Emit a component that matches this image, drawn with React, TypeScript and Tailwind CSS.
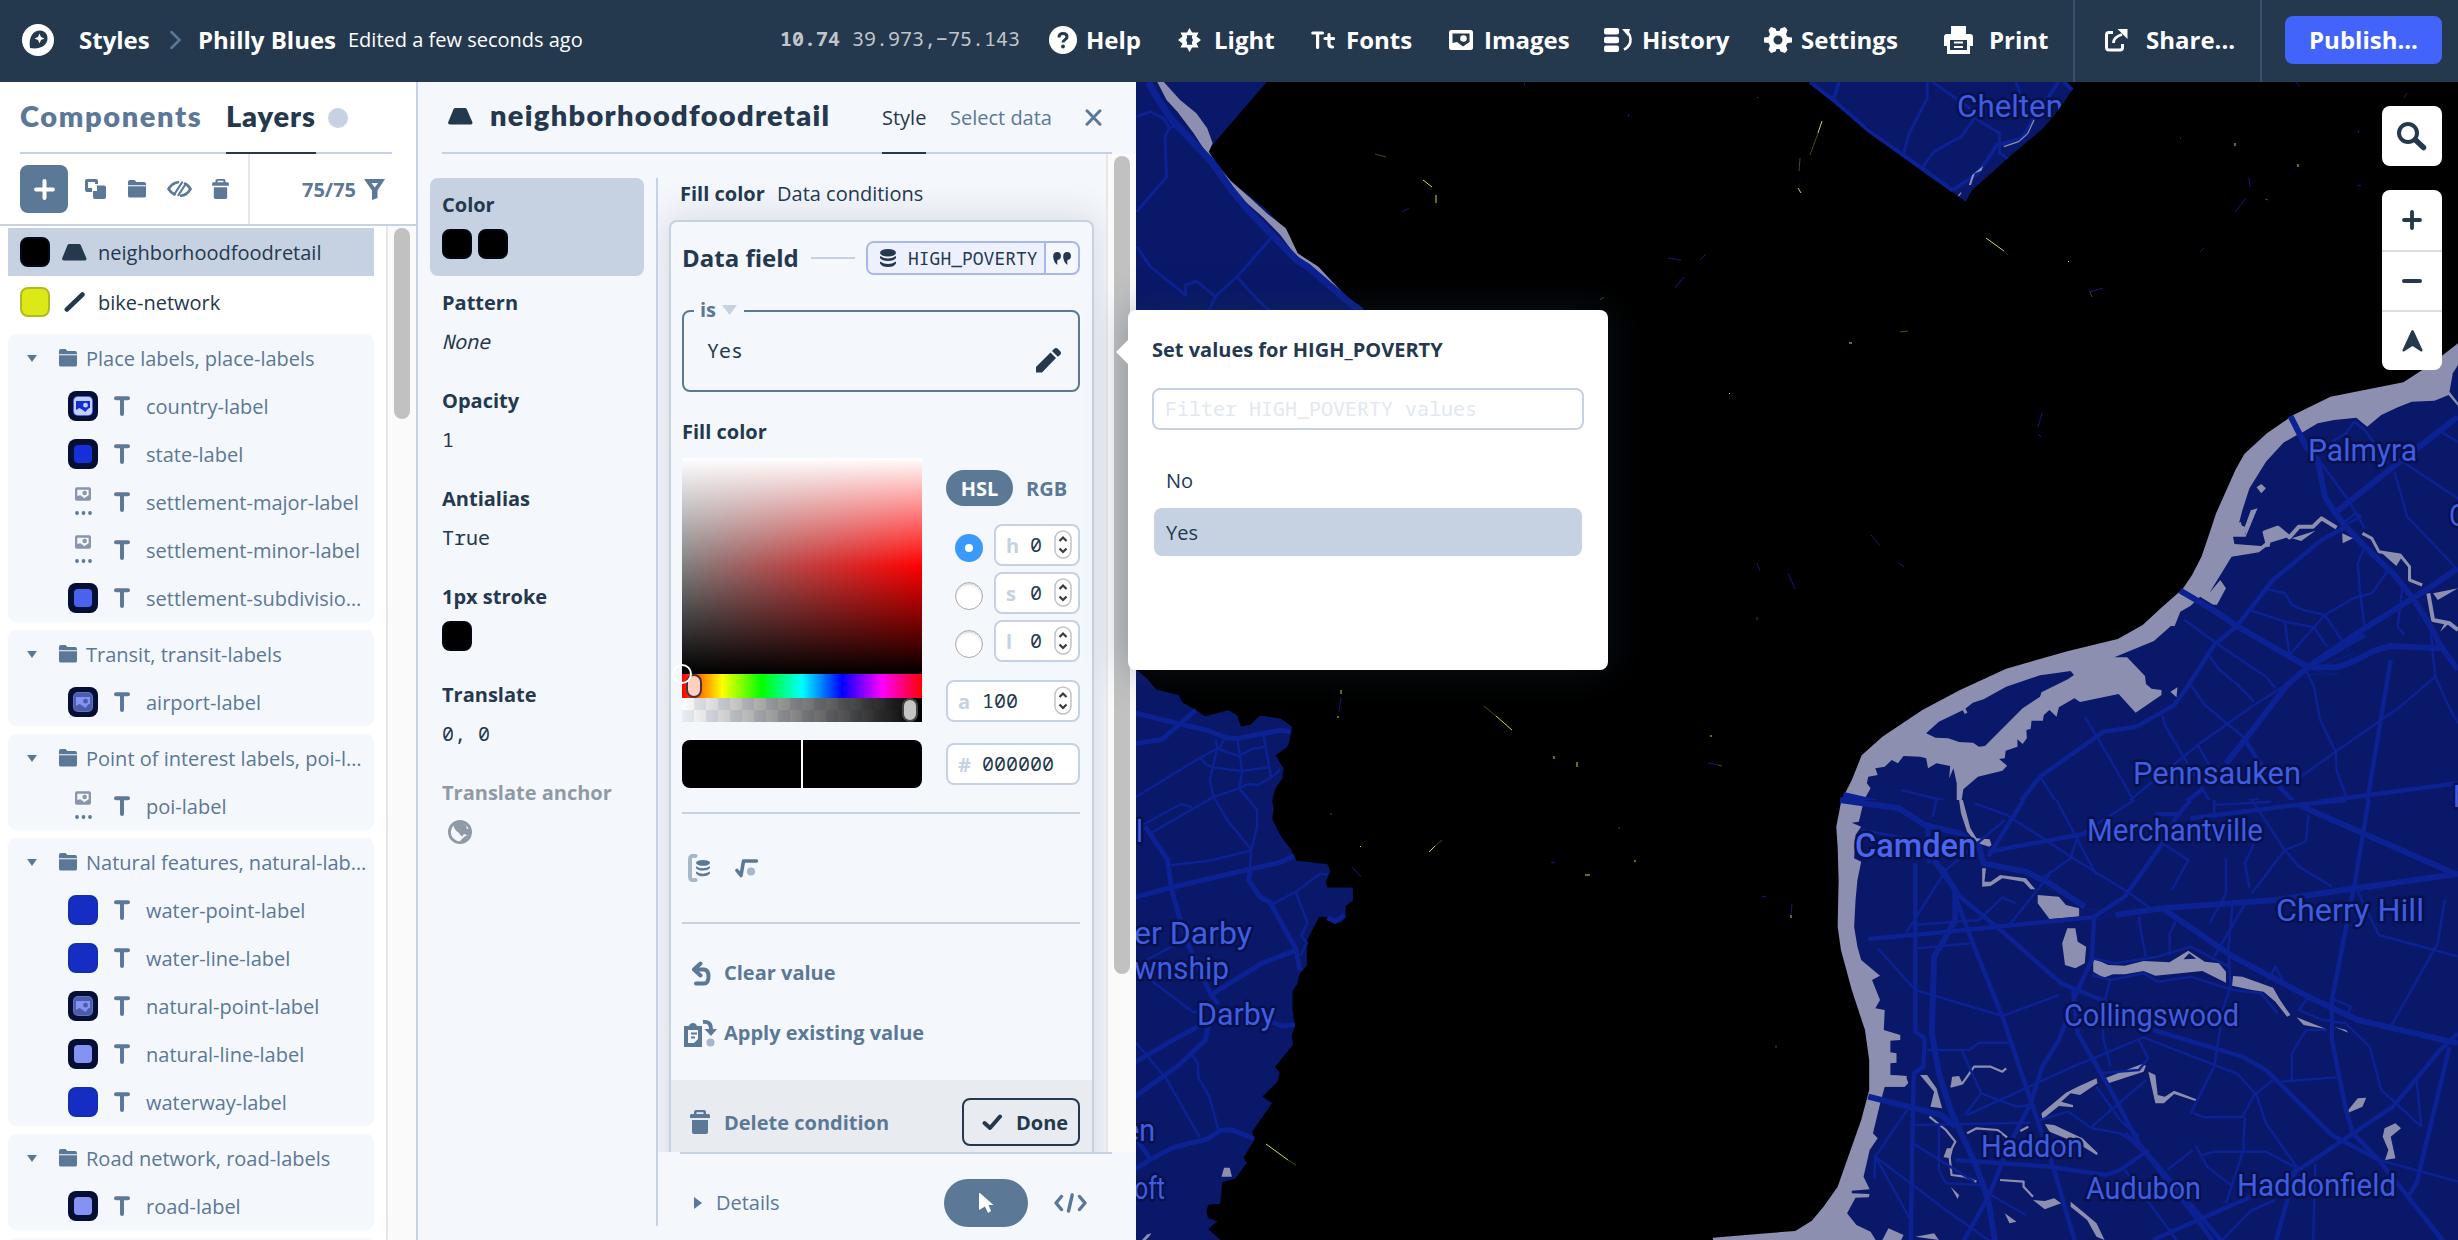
import React from 'react';

const SANS = "font-['Open_Sans',sans-serif]";
const MONO = "font-['Noto_Sans_Mono','DejaVu_Sans_Mono',monospace]";

type IconProps = { className?: string };

/* ---------- icons ---------- */

const LogoIcon = () => (
  <svg width="32" height="32" viewBox="0 0 32 32" fill="none">
    <circle cx="16" cy="16" r="16" fill="#fff" />
    <path d="M8 24 C6 12 12 6.500 18 6.500 C23 6.500 25.500 10.500 25.500 14.500 C25.500 20.500 19 26 8 24Z" fill="#24384e" />
    <path d="M17.500 9.500 L19 13 L22.500 14.500 L19 16 L17.500 19.500 L16 16 L12.500 14.500 L16 13Z" fill="#fff" />
  </svg>
);

const HelpIcon = () => (
  <svg width="28" height="28" viewBox="0 0 28 28" fill="none">
    <circle cx="14" cy="14" r="14" fill="#fff" />
    <path d="M10 11.500 C10 9 11.500 7.500 14 7.500 C16.500 7.500 18 9 18 11 C18 13.500 14 13.800 14 16.500" stroke="#24384e" strokeWidth="3" />
    <circle cx="14" cy="20.500" r="1.900" fill="#24384e" />
  </svg>
);

const LightIcon = () => (
  <svg width="23" height="24" viewBox="0 0 23 24" fill="#fff">
    <path
      fillRule="evenodd"
      d="M11.500 0 L14 4.500 H20.500 L18.500 8.500 L23 12 L18.500 15.500 L20.500 19.500 H14 L11.500 24 L9 19.500 H2.500 L4.500 15.500 L0 12 L4.500 8.500 L2.500 4.500 H9Z M8.500 7.300 Q10 9 8 12 Q10 15 8.500 16.700 H14.500 Q13 15 15 12 Q13 9 14.500 7.300Z"
    />
  </svg>
);

const FontsIcon = () => (
  <svg width="24" height="20" viewBox="0 0 24 20" fill="none" stroke="#fff" strokeWidth="3.200" strokeLinecap="round">
    <path d="M1.800 3 H11.500 M6.600 3 V17.500" />
    <path d="M14 8.500 H22.500 M18 4.500 V14 Q18 17 21.500 17" />
  </svg>
);

const ImageIcon = ({ className = '' }: IconProps) => (
  <svg className={className} viewBox="0 0 24 20">
    <path
      fill="currentColor"
      fillRule="evenodd"
      d="M2.500 0 H21.500 Q24 0 24 2.500 V17.500 Q24 20 21.500 20 H2.500 Q0 20 0 17.500 V2.500 Q0 0 2.500 0Z M3.500 3.500 V13 L8 12 L14 16.500 L20.500 12 V3.500Z"
    />
    <circle cx="14.500" cy="8.500" r="3.300" fill="currentColor" />
  </svg>
);

const HistoryIcon = () => (
  <svg width="29" height="24" viewBox="0 0 29 24">
    <g fill="#fff">
      <rect x="0" y="0" width="15" height="6.500" rx="2" />
      <rect x="0" y="8.700" width="15" height="6.500" rx="2" />
      <rect x="0" y="17.400" width="15" height="6.500" rx="2" />
      <path d="M18 1 L26 1 L24 8Z" />
    </g>
    <path d="M20 21.500 Q27 18 26.500 11 Q26 6 22 3" fill="none" stroke="#fff" strokeWidth="2.600" />
  </svg>
);

const SettingsIcon = () => (
  <svg width="28" height="26" viewBox="0 0 28 26">
    <path
      fill="#fff"
      fillRule="evenodd"
      d="M7 0 L11.500 1.500 L12.500 4 H15.500 L16.500 1.500 L21 0 L23.500 3 L22 7.500 L23.500 10 L28 10.500 V15.500 L23.500 16 L22 18.500 L23.500 23 L21 26 L16.500 24.500 L15.500 22 H12.500 L11.500 24.500 L7 26 L4.500 23 L6 18.500 L4.500 16 L0 15.500 V10.500 L4.500 10 L6 7.500 L4.500 3Z M14 8.500 A4.500 4.500 0 1 0 14 17.500 A4.500 4.500 0 1 0 14 8.500Z"
    />
  </svg>
);

const PrintIcon = () => (
  <svg width="29" height="28" viewBox="0 0 29 28">
    <path fill="#fff" d="M7 0 H22 V8 H26 Q29 8 29 11 V20 H26 V28 H3 V20 H0 V11 Q0 8 3 8 H7Z" />
    <path fill="#24384e" d="M6 14 H23 V24 H6Z" />
    <path fill="#fff" d="M10 15.500 H19 V17.500 H10Z M10 20 H19 V22 H10Z" />
  </svg>
);

const ShareIcon = () => (
  <svg width="23" height="23" viewBox="0 0 23 23" fill="none">
    <path d="M8 3.500 H4 Q1.500 3.500 1.500 6 V18.500 Q1.500 21 4 21 H15 Q17.500 21 17.500 18.500 V15" stroke="#fff" strokeWidth="3" />
    <path d="M8.500 14 Q8.500 8 17 5.500" stroke="#fff" strokeWidth="2.800" />
    <path d="M12.500 0 H22.500 V10Z" fill="#fff" />
  </svg>
);

const ChevronIcon = () => (
  <svg width="12" height="18" viewBox="0 0 12 18" fill="none">
    <path d="M1.500 1 L9.500 9 L1.500 17" stroke="#5b7897" strokeWidth="2.600" strokeLinecap="round" />
  </svg>
);

const PlusIcon = ({ className = '' }: IconProps) => (
  <svg className={className} viewBox="0 0 20 20" stroke="currentColor" strokeWidth="3.800" strokeLinecap="round">
    <path d="M10 2 V18 M2 10 H18" />
  </svg>
);

const CopyIcon = () => (
  <svg width="21" height="20" viewBox="0 0 21 20" fill="#5b7897">
    <path fillRule="evenodd" d="M2 0 H11 Q13 0 13 2 V5 H10 V3 H3 V9 H7 V13 H2 Q0 13 0 11 V2 Q0 0 2 0Z" />
    <path d="M10 6.500 H19 Q21 6.500 21 8.500 V18 Q21 20 19 20 H10 Q8 20 8 18 V12 H12 V7Z" />
  </svg>
);

const FolderIcon = () => (
  <svg width="18" height="18" viewBox="0 0 18 18" fill="#5b7897">
    <path d="M0 2 Q0 0 2 0 H6.500 L8.500 2 H16 Q18 2 18 4 V5.200 H0Z" />
    <path d="M0 6.300 H18 V16 Q18 17.500 16 17.500 H2 Q0 17.500 0 16Z" />
  </svg>
);

const EyeOffIcon = () => (
  <svg width="25" height="18" viewBox="0 0 25 18" fill="none" stroke="#5b7897" strokeWidth="2.600" strokeLinecap="round">
    <path d="M7.500 14.500 Q4 13 1.500 9 Q5 3 11 2.200 M18 3.500 Q21 5 23.500 9 Q20 15 14 15.800" />
    <path d="M15 2.500 L7.500 14 M18 5 L11.500 15" strokeWidth="2.200" />
  </svg>
);

const TrashIcon = ({ className = '' }: IconProps) => (
  <svg className={className} viewBox="0 0 20 24" fill="currentColor">
    <path fillRule="evenodd" d="M6 0 H14 Q16 0 16 2 V4 H18.500 Q20 4 20 5.500 V8 H0 V5.500 Q0 4 1.500 4 H4 V2 Q4 0 6 0Z M6.500 2.200 V4 H13.500 V2.200Z" />
    <path d="M2 10 H18 V22 Q18 24 16 24 H4 Q2 24 2 22Z" />
  </svg>
);

const FilterIcon = () => (
  <svg width="21" height="21" viewBox="0 0 21 21" fill="#5b7897">
    <path fillRule="evenodd" d="M0 0 H21 L13.500 11.500 V19 L8 21 V11.500Z M7.500 4 L10.700 8.500 L14 4Z" />
  </svg>
);

const PolygonIcon = () => (
  <svg width="25" height="17" viewBox="0 0 25 17" fill="#24384e">
    <path d="M7.500 0 H17 Q18.200 0 18.800 1.200 L24.300 14 Q25 16.500 22.500 16.500 H2 Q-.5 16.500 .3 14 L5.500 1.200 Q6 0 7.500 0Z" />
  </svg>
);

const LineIcon = () => (
  <svg width="22" height="20" viewBox="0 0 22 20" stroke="#24384e" strokeWidth="4.500" strokeLinecap="round">
    <path d="M2.800 17.500 L18.500 2.500" />
  </svg>
);

const TextTypeIcon = () => (
  <svg width="16" height="20" viewBox="0 0 16 20" stroke="#5b7897" strokeWidth="4" strokeLinecap="round">
    <path d="M2 2.300 H14 M8 3 V18" />
  </svg>
);

const CaretDown = ({ className = '' }: IconProps) => (
  <svg className={className} viewBox="0 0 10 7" preserveAspectRatio="none" fill="currentColor">
    <path d="M0 0 H10 L5 7Z" />
  </svg>
);

const DatabaseIcon = ({ className = '' }: IconProps) => (
  <svg className={className} viewBox="0 0 16 18" fill="currentColor">
    <ellipse cx="8" cy="3.800" rx="8" ry="3.800" />
    <path d="M0 7 Q8 12 16 7 V9 Q14 12 8 12 Q2 12 0 9Z M0 12.500 Q8 17.500 16 12.500 V14.500 Q14 18 8 18 Q2 18 0 14.500Z" />
  </svg>
);

const QuoteIcon = () => (
  <svg width="18" height="13" viewBox="0 0 18 13" fill="#24384e">
    <path d="M4.200 0 Q0 0 .2 5 Q.5 10 4.500 13 Q4 10 4.500 8 Q8 7.500 8 4 Q7.800 0 4.200 0Z M14.200 0 Q10 0 10.200 5 Q10.500 10 14.500 13 Q14 10 14.500 8 Q18 7.500 18 4 Q17.800 0 14.200 0Z" />
  </svg>
);

const PencilIcon = () => (
  <svg width="25" height="25" viewBox="0 0 25 25" fill="#24384e">
    <path d="M0 19 L14.500 4.500 L20 10 L6 24.500 H0Z" />
    <path d="M16 3 L18 1 Q20 -1 22 1 L24 3 Q26 5 24 7 L21.800 8.800Z" />
  </svg>
);

const GlobeIcon = () => (
  <svg width="24" height="24" viewBox="0 0 24 24">
    <circle cx="12" cy="12" r="10.600" fill="none" stroke="#8f9aa6" strokeWidth="2.800" />
    <path d="M5 4 Q8 1 13 1.200 L19 6 Q17 8 20 9 L22 9 Q22 14 20 16 Q15 12 15 16 Q13 17 11 13 Q6 10 5 4Z" fill="#8f9aa6" />
    <path d="M12 21 Q17 15 21 15 L17 21Z" fill="#8f9aa6" />
  </svg>
);

const BracketDataIcon = () => (
  <svg width="22" height="28" viewBox="0 0 22 28">
    <path d="M7.500 2 Q2 1 2 5 V23 Q2 27 7.500 26" fill="none" stroke="#a6b7cb" strokeWidth="4" strokeLinecap="round" />
    <g transform="translate(8 6) scale(.88)" fill="#5b7897">
      <ellipse cx="8" cy="3.300" rx="8" ry="3.300" />
      <path d="M0 7 Q8 12 16 7 V9 Q14 12 8 12 Q2 12 0 9Z M0 13 Q8 18 16 13 V15 Q14 18.500 8 18.500 Q2 18.500 0 15Z" />
    </g>
  </svg>
);

const FormulaIcon = () => (
  <svg width="24" height="19" viewBox="0 0 24 19" fill="none">
    <path d="M2 11.500 L6 16.500 L8.500 2 H21.500" stroke="#5b7897" strokeWidth="3.600" strokeLinecap="round" strokeLinejoin="round" />
    <circle cx="16" cy="12.500" r="4" fill="#a6b7cb" />
  </svg>
);

const UndoIcon = () => (
  <svg width="20" height="25" viewBox="0 0 20 25" fill="none" stroke="#5b7897" strokeWidth="4" strokeLinecap="round" strokeLinejoin="round">
    <path d="M9.500 2.500 L3 8.500 L9.500 14.500 M4 8.500 H13 Q17.500 9 17.500 15 Q17.500 22.500 13 22.500 H5" />
  </svg>
);

const ApplyIcon = () => (
  <svg width="33" height="27" viewBox="0 0 33 27">
    <path fill="#5b7897" fillRule="evenodd" d="M0 6 H5 Q6 3 9 3 Q12 3 13 6 H18 V27 H0Z M4 10 V23 H10 L14 19 V10Z" />
    <path d="M7 13.500 H13 M7 17.500 H11" stroke="#5b7897" strokeWidth="2" />
    <path d="M19 2 Q27 1 27 9" fill="none" stroke="#5b7897" strokeWidth="3.800" />
    <path d="M20.500 9 H33 L27 16Z" fill="#5b7897" />
    <circle cx="26.500" cy="22.500" r="4" fill="#a6b7cb" />
  </svg>
);

const CheckIcon = () => (
  <svg width="21" height="17" viewBox="0 0 21 17" fill="none" stroke="#24384e" strokeWidth="4" strokeLinecap="round" strokeLinejoin="round">
    <path d="M2.500 9 L8 14 L18 2.500" />
  </svg>
);

const PointerIcon = () => (
  <svg width="15" height="20" viewBox="0 0 15 20" fill="#fff">
    <path d="M0 .5 Q.5 -.5 1.500 .5 L14.500 12 H9.500 L12 18 L9 20 L6 13.500 L0 17Z" />
  </svg>
);

const CodeIcon = () => (
  <svg width="33" height="20" viewBox="0 0 33 20" fill="none" stroke="#5b7897" strokeWidth="3.400" strokeLinecap="round" strokeLinejoin="round">
    <path d="M7.500 3.500 L2 10 L7.500 16.500 M25.500 3.500 L31 10 L25.500 16.500 M18.200 2 L14.500 18" />
  </svg>
);

const CloseIcon = () => (
  <svg width="17" height="17" viewBox="0 0 17 17" stroke="#5b7897" strokeWidth="3" strokeLinecap="round">
    <path d="M2 1.800 L15 15.200 M15 1.800 L2 15.200" />
  </svg>
);

/* ---------- header ---------- */

type NavItem = { label: string; width: string; iconWidth: string; icon: React.ReactNode };

const nav: NavItem[] = [
  { label: 'Help', width: 'w-[129px]', iconWidth: 'w-[37px]', icon: <HelpIcon /> },
  { label: 'Light', width: 'w-[133px]', iconWidth: 'w-9', icon: <LightIcon /> },
  { label: 'Fonts', width: 'w-[138px]', iconWidth: 'w-[35px]', icon: <FontsIcon /> },
  { label: 'Images', width: 'w-[155px]', iconWidth: 'w-[35px]', icon: <ImageIcon className="h-5 w-6" /> },
  { label: 'History', width: 'w-40', iconWidth: 'w-[38px]', icon: <HistoryIcon /> },
  { label: 'Settings', width: 'w-[180px]', iconWidth: 'w-[37px]', icon: <SettingsIcon /> },
  { label: 'Print', width: 'w-[129px]', iconWidth: 'w-[45px]', icon: <PrintIcon /> },
];

function Header() {
  return (
    <header className="flex h-[82px] w-full shrink-0 items-stretch bg-[#24384e] text-2xl leading-8 font-bold whitespace-nowrap text-white">
      <div className="flex w-[780px] items-center pb-0.5 pl-[22px]">
        <div className="w-[57px]"><LogoIcon /></div>
        <span className="w-[91px]">Styles</span>
        <span className="w-[28px]"><ChevronIcon /></span>
        <span className="w-[150px]">Philly Blues</span>
        <span className="text-xl font-normal">Edited a few seconds ago</span>
      </div>
      <div className={`flex w-[269px] items-center pb-1 text-xl font-normal text-[#c0c5cb] ${MONO}`}>
        <span className="w-[72px] font-bold">10.74</span>
        <span>39.973,−75.143</span>
      </div>
      {nav.map((n) => (
        <div key={n.label} className={`flex items-center pb-0.5 ${n.width}`}>
          <span className={n.iconWidth}>{n.icon}</span>
          <span>{n.label}</span>
        </div>
      ))}
      <div className="flex w-[187px] items-center border-l-2 border-[#3c5068] pb-0.5 pl-[30px]">
        <span className="w-[41px]"><ShareIcon /></span>
        <span>Share...</span>
      </div>
      <div className="flex flex-1 items-center border-l-2 border-[#3c5068] pb-0.5 pl-[23px]">
        <button className="h-12 w-[157px] rounded-lg bg-[#4264fb] text-center font-bold">Publish...</button>
      </div>
    </header>
  );
}

/* ---------- layer list ---------- */

type Swatch = 'outlined' | 'solid' | 'icon' | 'more';
type Layer = { name: string; swatch: Swatch; fill?: string; glyph?: string };

const groups: { name: string; layers: Layer[] }[] = [
  {
    name: 'Place labels, place-labels',
    layers: [
      { name: 'country-label', swatch: 'icon', fill: 'bg-[#c9d1fa] ring-[#4264fb]', glyph: 'text-[#1330d8]' },
      { name: 'state-label', swatch: 'outlined', fill: 'bg-[#1530d8]' },
      { name: 'settlement-major-label', swatch: 'more' },
      { name: 'settlement-minor-label', swatch: 'more' },
      { name: 'settlement-subdivisio…', swatch: 'outlined', fill: 'bg-[#4963ee]' },
    ],
  },
  {
    name: 'Transit, transit-labels',
    layers: [{ name: 'airport-label', swatch: 'icon', fill: 'bg-[#4b5cab] ring-[#6173c4]', glyph: 'text-[#8492f3]' }],
  },
  { name: 'Point of interest labels, poi-l…', layers: [{ name: 'poi-label', swatch: 'more' }] },
  {
    name: 'Natural features, natural-lab…',
    layers: [
      { name: 'water-point-label', swatch: 'solid' },
      { name: 'water-line-label', swatch: 'solid' },
      { name: 'natural-point-label', swatch: 'icon', fill: 'bg-[#4b5cab] ring-[#6173c4]', glyph: 'text-[#8492f3]' },
      { name: 'natural-line-label', swatch: 'outlined', fill: 'bg-[#8492f3]' },
      { name: 'waterway-label', swatch: 'solid' },
    ],
  },
  { name: 'Road network, road-labels', layers: [{ name: 'road-label', swatch: 'outlined', fill: 'bg-[#8492f3]' }] },
];

function SymbolGlyph({ className = '' }: IconProps) {
  return (
    <svg className={className} viewBox="0 0 14 11" fill="currentColor">
      <path fillRule="evenodd" d="M0 0 H14 V7 Q12.500 6.500 9.500 11 L6 8.500 L3.500 7 L0 9Z M9.500 1.800 A2.400 2.400 0 1 0 9.500 6.600 A2.400 2.400 0 1 0 9.500 1.800Z" />
    </svg>
  );
}

function LayerSwatch({ layer }: { layer: Layer }) {
  if (layer.swatch === 'solid') return <span className="size-[30px] rounded-lg border-2 border-[#142fae] bg-[#152dc2]" />;
  if (layer.swatch === 'more')
    return (
      <span className="flex size-[30px] flex-col items-center justify-between pb-0.5">
        <ImageIcon className="h-3.5 w-4 text-[#8796a8]" />
        <svg width="17" height="4" viewBox="0 0 17 4" fill="#5b7897">
          <circle cx="2" cy="2" r="1.900" />
          <circle cx="8.500" cy="2" r="1.900" />
          <circle cx="15" cy="2" r="1.900" />
        </svg>
      </span>
    );
  return (
    <span className="flex size-[30px] items-center justify-center rounded-lg bg-[#050e33]">
      <span className={`flex size-[18px] items-center justify-center rounded-sm ${layer.swatch === 'icon' ? 'ring-1' : ''} ${layer.fill}`}>
        {layer.swatch === 'icon' && <SymbolGlyph className={`h-[11px] w-3.5 ${layer.glyph}`} />}
      </span>
    </span>
  );
}

function LayersPanel() {
  return (
    <aside className="flex w-[418px] shrink-0 flex-col border-r-2 border-[#c6d2e1] bg-white">
      <div className="ml-5 flex h-[72px] w-[372px] border-b-2 border-[#c6d2e1] font-['Lato',sans-serif] text-[29px] leading-[68px] font-extrabold">
        <span className="w-[206px] tracking-[1.6px] text-[#5b7897]">Components</span>
        <span className="h-[72px] w-[90px] border-b-2 border-[#24384e] tracking-[.9px] whitespace-nowrap text-[#24384e]">Layers</span>
        <span className="mt-[26px] ml-3 size-5 rounded-full bg-[#c6d2e1]" />
      </div>
      <div className="flex h-[72px] w-full shrink-0 items-stretch border-b-2 border-[#c6d2e1] pl-5">
        <div className="flex w-[230px] items-center border-r-2 border-[#e6e8eb]">
          <span className="flex size-12 items-center justify-center rounded-lg bg-[#5b7897] text-white">
            <PlusIcon className="size-[21px]" />
          </span>
          <span className="ml-[17px]"><CopyIcon /></span>
          <span className="ml-[22px]"><FolderIcon /></span>
          <span className="ml-[21px]"><EyeOffIcon /></span>
          <TrashIcon className="ml-5 h-5 w-[17px] text-[#5b7897]" />
        </div>
        <div className="flex items-center pl-[52px] text-xl font-bold text-[#5b7897]">
          <span className="w-[62px] pt-px">75/75</span>
          <FilterIcon />
        </div>
      </div>
      <div className="flex min-h-0 flex-1 overflow-hidden text-xl whitespace-nowrap">
        <div className="flex w-[386px] flex-col gap-2 pt-0.5 pr-3 pl-2">
          <div className="flex flex-col text-[#24384e]">
            <div className="flex h-12 items-center bg-[#c6d2e1] pl-3">
              <span className="size-[30px] rounded-lg border-2 border-[#020c16] bg-black" />
              <span className="ml-3 w-9"><PolygonIcon /></span>
              <span className="pt-px">neighborhoodfoodretail</span>
            </div>
            <div className="flex h-[50px] items-center pt-0.5 pl-3">
              <span className="size-[30px] rounded-lg border-2 border-[#b1bb1d] bg-[#dde916]" />
              <span className="ml-3.5 w-[34px]"><LineIcon /></span>
              <span className="pt-px">bike-network</span>
            </div>
          </div>
          {groups.map((g) => (
            <div key={g.name} className="shrink-0 rounded-lg bg-[#f4f7fc] text-[#5b7897]">
              <div className="flex h-12 items-center pl-[19px]">
                <CaretDown className="h-[7px] w-2.5" />
                <span className="mr-[9px] ml-[22px]"><FolderIcon /></span>
                <span className="pt-px">{g.name}</span>
              </div>
              {g.layers.map((l) => (
                <div key={l.name} className="flex h-12 items-center pl-[60px]">
                  <LayerSwatch layer={l} />
                  <span className="mr-4 ml-4"><TextTypeIcon /></span>
                  <span className="pt-px">{l.name}</span>
                </div>
              ))}
            </div>
          ))}
          <div className="h-12 shrink-0 rounded-lg bg-[#f4f7fc]" />
        </div>
        <div className="flex w-[30px] justify-center border-l-2 border-[#e7e7e7] bg-[#fafafa] pt-0.5">
          <span className="h-[191px] w-4 rounded-lg bg-[#c1c1c1]" />
        </div>
      </div>
    </aside>
  );
}

/* ---------- style panel ---------- */

const BlackSwatch = () => <span className="size-[30px] rounded-lg border-2 border-[#020812] bg-black" />;

function Property({ label, active, muted, children }: { label: string; active?: boolean; muted?: boolean; children: React.ReactNode }) {
  return (
    <div className={`h-[98px] w-[214px] rounded-lg pt-[13px] pl-3 ${active ? 'bg-[#c6d2e1]' : ''}`}>
      <div className={`h-7 text-xl leading-7 font-bold ${muted ? 'text-[#8f9aa6]' : 'text-[#24384e]'}`}>{label}</div>
      <div className={`mt-2.5 flex h-[30px] items-center gap-1.5 text-xl ${MONO}`}>{children}</div>
    </div>
  );
}

const Stepper = () => (
  <svg className="h-[30px] w-[18px] shrink-0" viewBox="0 0 18 30" fill="none">
    <rect x="1" y="1" width="16" height="27" rx="8" fill="#fff" stroke="#c2c2c2" strokeWidth="1.500" />
    <path d="M5.500 11 L9 7.500 L12.500 11 M5.500 18.500 L9 22 L12.500 18.500" stroke="#3a3a3a" strokeWidth="2.200" />
  </svg>
);

function Field({ width, tag, value, stepper = true }: { width: string; tag: string; value: string; stepper?: boolean }) {
  return (
    <div className={`flex h-[42px] items-center rounded-lg border-2 border-[#c6d2e1] bg-white pl-2.5 text-xl ${width}`}>
      <span className="w-[24px] pt-0.5 font-['Open_Sans',sans-serif] font-bold text-[#c6d2e1]">{tag}</span>
      <span className={`flex-1 text-[#24384e] ${MONO}`}>{value}</span>
      {stepper && <span className="mr-1.5"><Stepper /></span>}
    </div>
  );
}

const Radio = ({ checked }: { checked?: boolean }) =>
  checked ? (
    <span className="mt-1.5 flex size-7 items-center justify-center rounded-full bg-[#3b99fc]">
      <span className="size-2 rounded-full bg-white" />
    </span>
  ) : (
    <span className="mt-1.5 size-7 rounded-full border border-[#ababab] bg-white shadow-[inset_0_2px_2px_#0002]" />
  );

function ColorPicker() {
  return (
    <div className="mt-3 flex h-[330px]">
      <div className="flex w-60 flex-col">
        <div className="relative h-[216px] bg-[linear-gradient(to_bottom,#ffffff_0%,#ffffff00_50%,#00000000_50%,#000000_100%),linear-gradient(to_right,#808080,#ff0000)]">
          <span className="absolute -bottom-2.5 -left-2.5 z-10 size-5 rounded-full border-2 border-white" />
        </div>
        <div className="relative h-6 bg-[linear-gradient(to_right,#f00,#ff0,#0f0,#0ff,#00f,#f0f,#f00)]">
          <span className="absolute top-0 left-1 h-6 w-4 rounded-lg border-2 border-[#4a3434] bg-[#ffd0c0]" />
        </div>
        <div className="relative h-6 bg-[linear-gradient(to_right,#00000000,#000),repeating-conic-gradient(#e9edf3_0_25%,#fdfdfd_0_50%)] bg-[length:100%_100%,24px_24px]">
          <span className="absolute top-0 right-1 h-6 w-4 rounded-lg border-2 border-[#444] bg-[#c4c4c4]" />
        </div>
        <div className="mt-[18px] flex h-12 gap-0.5 overflow-hidden rounded-lg bg-white">
          <span className="flex-1 bg-black" />
          <span className="flex-1 bg-black" />
        </div>
      </div>
      <div className="ml-6 flex w-[134px] flex-col">
        <div className="mt-3 flex h-9 items-center text-xl font-bold">
          <span className="flex h-9 w-[67px] items-center justify-center rounded-full bg-[#5b7897] pt-px text-white">HSL</span>
          <span className="ml-[13px] pt-px text-[#5b7897]">RGB</span>
        </div>
        <div className="mt-[18px] flex flex-col gap-1.5">
          {[
            ['h', true],
            ['s', false],
            ['l', false],
          ].map(([tag, on]) => (
            <div key={tag as string} className="flex items-center justify-between pl-[9px]">
              <Radio checked={on as boolean} />
              <Field width="w-[86px]" tag={tag as string} value="0" />
            </div>
          ))}
        </div>
        <div className="mt-[18px] flex flex-col gap-[21px]">
          <Field width="w-[134px]" tag="a" value="100" />
          <Field width="w-[134px]" tag="#" value="000000" stepper={false} />
        </div>
      </div>
    </div>
  );
}

function ConditionCard() {
  return (
    <div className="ml-[11px] h-[1000px] w-[425px] rounded-lg border-2 border-[#c6d2e1] bg-[#f4f7fc] shadow-[0_0_36px_4px_rgba(31,51,73,.13)]">
      <div className="pr-3 pl-[11px]">
        <div className="flex h-[72px] items-center">
          <span className="w-[129px] text-2xl font-bold text-[#24384e]">Data field</span>
          <span className="h-0.5 w-11 bg-[#c6d2e1]" />
          <span className="ml-auto flex h-[34px] w-[214px] overflow-hidden rounded-lg border-2 border-[#a9b6ee]">
            <span className={`flex w-[178px] items-center border-r-2 border-[#a9b6ee] bg-[#edf0fd] pl-3 text-lg text-[#24384e] ${MONO}`}>
              <DatabaseIcon className="mr-[12px] h-[18px] w-4" />
              HIGH_POVERTY
            </span>
            <span className="flex flex-1 items-center justify-center"><QuoteIcon /></span>
          </span>
        </div>
        <div className="relative mt-4 flex h-[82px] items-center rounded-lg border-2 border-[#5b7897] pl-[23px]">
          <span className="absolute -top-4 left-2.5 flex h-7 items-center bg-[#f4f7fc] pr-[7px] pl-1.5 text-xl font-bold text-[#5b7897]">
            <span className="w-[22px]">is</span>
            <CaretDown className="h-2.5 w-[15px] text-[#c6d2e1]" />
          </span>
          <span className={`text-xl text-[#24384e] ${MONO}`}>Yes</span>
          <span className="absolute right-[17px] bottom-[17px]"><PencilIcon /></span>
        </div>
        <div className="mt-[26px] h-7 text-xl leading-7 font-bold text-[#24384e]">Fill color</div>
        <ColorPicker />
        <div className="mt-6 flex h-28 items-center gap-[25px] border-y-2 border-[#c6d2e1] pl-1.5">
          <BracketDataIcon />
          <FormulaIcon />
        </div>
        <div className="mt-[19px] flex h-[60px] items-center text-xl font-bold text-[#5b7897]">
          <span className="w-[42px] pl-[9px]"><UndoIcon /></span>Clear value
        </div>
        <div className="flex h-[60px] items-center text-xl font-bold text-[#5b7897]">
          <span className="w-[42px] pl-0.5"><ApplyIcon /></span>Apply existing value
        </div>
      </div>
      <div className="mt-[17px] flex h-[84px] items-center bg-[#e8ebf0] pr-3 pl-[11px] text-xl font-bold text-[#5b7897]">
        <span className="w-[42px] pl-2"><TrashIcon className="h-6 w-5" /></span>
        <span className="pt-px">Delete condition</span>
        <span className="ml-auto flex h-12 w-[118px] items-center rounded-lg border-2 border-[#24384e] pl-[18px] text-[#24384e]">
          <span className="w-[34px]"><CheckIcon /></span>
          <span className="pt-px">Done</span>
        </span>
      </div>
    </div>
  );
}

function StylePanel() {
  return (
    <section className="flex w-[718px] shrink-0 flex-col bg-[#f4f7fc] text-[#24384e]">
      <div className="ml-6 flex h-[72px] w-[670px] shrink-0 border-b-2 border-[#c6d2e1] leading-[70px]">
        <span className="flex w-12 items-center pb-0.5 pl-1.5"><PolygonIcon /></span>
        <h2 className="w-[392px] font-['Lato',sans-serif] text-[29px] leading-[66px] font-extrabold tracking-[1.3px] whitespace-nowrap">neighborhoodfoodretail</h2>
        <span className="h-[72px] w-11 border-b-2 border-[#24384e] text-xl leading-[71px] whitespace-nowrap">Style</span>
        <span className="ml-6 w-[135px] text-xl leading-[71px] text-[#5b7897]">Select data</span>
        <span className="flex items-center"><CloseIcon /></span>
      </div>
      <div className="flex min-h-0 flex-1">
        <div className="mt-6 mb-[14px] flex w-60 shrink-0">
          <div className="flex w-[238px] shrink-0 flex-col pl-3">
            <Property label="Color" active><BlackSwatch /><BlackSwatch /></Property>
            <Property label="Pattern"><span className="italic">None</span></Property>
            <Property label="Opacity">1</Property>
            <Property label="Antialias">True</Property>
            <Property label="1px stroke"><BlackSwatch /></Property>
            <Property label="Translate">0, 0</Property>
            <Property label="Translate anchor" muted><span className="pl-1.5"><GlobeIcon /></span></Property>
          </div>
          <div className="w-0.5 shrink-0 bg-[#c6d2e1]" />
        </div>
        <div className="flex flex-1 flex-col">
          <div className="flex h-[998px] overflow-hidden">
            <div className="w-[448px] overflow-hidden">
              <div className="flex h-[66px] items-center pt-3.5 pl-[22px] text-xl">
                <span className="w-[97px] font-bold">Fill color</span>
                <span>Data conditions</span>
              </div>
              <ConditionCard />
            </div>
            <div className="flex w-[30px] justify-center border-l-2 border-[#e7e7e7] bg-[#fafafa] pt-0.5">
              <span className="h-[818px] w-4 rounded-lg bg-[#c1c1c1]" />
            </div>
          </div>
          <div className="ml-[22px] flex h-[88px] w-[432px] items-center border-t-2 border-[#c6d2e1] pt-3">
            <svg className="ml-3.5 h-3 w-2" viewBox="0 0 8 12" fill="#5b7897"><path d="M0 0 L8 6 L0 12Z" /></svg>
            <span className="ml-3.5 w-[228px] text-xl text-[#5b7897]">Details</span>
            <span className="flex h-12 w-[84px] items-center justify-center rounded-full bg-[#5b7897]"><PointerIcon /></span>
            <span className="ml-[26px]"><CodeIcon /></span>
          </div>
        </div>
      </div>
    </section>
  );
}

/* ---------- map ---------- */

const LAND = '#091868';
const ROAD = '#0c2192';
const WATER = '#8c8fb0';

/* Each sheet keeps its own local coordinates and is scaled into map space. */
function Roads({ lines, width }: { lines: string[]; width: number }) {
  return (
    <g fill="none" stroke={ROAD} strokeWidth={width} strokeLinejoin="round">
      {lines.map((p, i) => (
        <polyline key={i} points={p} vectorEffect="non-scaling-stroke" />
      ))}
    </g>
  );
}

function Areas({ shapes, fill }: { shapes: string[]; fill: string }) {
  return (
    <g fill={fill}>
      {shapes.map((p, i) => (
        <polygon key={i} points={p} />
      ))}
    </g>
  );
}

function Creeks({ lines, width }: { lines: string[]; width: number }) {
  return (
    <g fill="none" stroke={WATER} strokeWidth={width} strokeLinejoin="round">
      {lines.map((p, i) => (
        <polyline key={i} points={p} vectorEffect="non-scaling-stroke" />
      ))}
    </g>
  );
}

const NorthWest = () => (
  <g transform="translate(760 0) scale(.54209 .33333)">
    <Areas fill={LAND} shapes={['690,240 938,240 832,440 828,455 870,545 935,630 975,700 990,760 1030,800 1107,930 1107,960 690,960']} />
    <Areas fill={WATER} shapes={['731,240 745,246 775,300 805,340 825,385 835,430 828,455 845,500 870,545 905,595 935,640 970,685 992,760 1030,800 1087,900 1080,900 1025,815 985,760 960,705 930,655 885,590 850,520 822,455 800,400 770,335 750,300']} />
    <Roads width={7} lines={['716,246 735,300 760,360 830,480 870,570 900,630 945,705 990,780 1010,800 1085,905 1110,935']} />
    <Roads width={3} lines={['695,350 720,335 745,355 755,385 747,410 750,530 695,635', '755,385 772,372', '695,740 720,800 785,885 785,855 805,843 840,890 880,830 945,710', '880,830 918,900 960,960', '840,890 820,960']} />
  </g>
);

const NorthCenter = () => (
  <g transform="translate(1600 0) scale(.54719 .33333)">
    <polygon fill={LAND} points="382,246 848,246 863,270 838,330 810,385 745,475 715,520 680,570 668,605 640,570 430,305" />
    <Roads width={4} lines={['384,246 430,305 490,390 645,572', '437,246 428,292', '838,246 795,350 772,415 725,435 712,470 690,520 645,570', '848,246 863,270']} />
    <Roads width={3} lines={['598,246 598,295 565,400 555,460', '608,246 680,330 682,360 660,410 610,455 590,500', '682,350 730,400 730,460 745,475', '760,246 775,310 790,350']} />
    <Creeks width={1.2} lines={['793,360 782,400 765,425 738,440', '655,588 660,578']} />
    <Areas fill={WATER} shapes={['700,498 697,512 685,520 678,555 674,555 680,525']} />
  </g>
);

const SouthWest = () => (
  <g transform="translate(1130 660) scale(.37628 .3699)">
    <Areas
      fill={LAND}
      shapes={[
        '0,0 16,26 45,50 70,80 130,95 140,115 175,135 200,152 262,135 285,150 295,180 320,175 345,150 400,158 430,180 425,215 418,235 387,258 408,293 405,320 385,350 378,380 382,400 378,430 400,475 430,515 442,542 525,552 533,572 520,600 525,615 592,615 593,650 573,665 573,695 560,710 545,710 520,695 502,695 470,760 470,825 450,850 445,875 432,895 432,945 438,990 430,1015 433,1040 385,1100 398,1115 392,1140 352,1180 378,1198 325,1275 330,1298 302,1345 310,1360 280,1402 245,1412 240,1470 208,1473 203,1490 207,1508 232,1518 208,1538 240,1568 0,1568',
      ]}
    />
    <Roads
      width={5}
      lines={[
        '0,140 140,175 205,190 255,210 285,212 400,190 428,193',
        '0,228 85,215 175,135',
        '0,645 110,615 320,565 400,547 435,530',
        '40,450 100,540 110,620 130,690 155,770 215,905',
        '320,565 315,595 345,640 372,655 440,780 452,840',
        '440,785 350,820 215,905 235,930',
        '0,1095 110,1030 200,980',
        '0,1190 130,1095 200,1028 210,980',
        '0,1385 55,1350 115,1318 205,1295 240,1272 270,1270 330,1295',
        '370,975 405,990 438,985',
        '20,1300 55,1350',
        '525,697 545,707 570,690',
      ]}
    />
    <Roads
      width={2.5}
      lines={[
        '16,370 185,265 240,235 250,212',
        '285,212 298,300 290,347',
        '228,215 232,240 290,260 325,240 357,235',
        '187,265 200,280 220,290 297,300 370,290',
        '355,205 375,318 400,295',
        '230,245 212,325 222,370 55,468',
        '222,370 290,347 315,335 340,338 375,318',
        '222,370 260,435 322,512',
        '290,347 338,405 338,450 322,515 318,565',
        '108,555 210,543 322,515',
        '35,445 135,390 165,397',
        '375,662 440,627 505,578 525,580',
        '440,627 472,710 455,745 470,765 452,800',
        '45,810 115,773',
        '55,865 165,950 200,955',
        '16,1035 95,1130 185,1290',
        '165,1068 180,1090 182,1130 210,1178 235,1270',
      ]}
    />
    <Areas fill={WATER} shapes={['250,1373 265,1373 271,1397 243,1397', '32,1568 45,1553 57,1550 50,1560 42,1568']} />
  </g>
);

const EastUpper = () => (
  <g transform="translate(1720 380) scale(.47066 .33333)">
    <Areas
      fill={WATER}
      shapes={[
        '1568,-110 1536,-75 1492,-30 1452,7 1297,50 1218,105 1162,160 1114,222 1095,270 1054,400 1040,460 1023,530 1003,585 983,627 940,680 898,735 845,777 740,813 608,866 510,930 430,990 345,1070 301,1126 280,1200 262,1250 255,1290 1568,1290',
      ]}
    />
    <Areas
      fill={LAND}
      shapes={[
        '1568,-45 1557,-20 1550,35 1568,68',
        '1568,78 1548,45 1518,62 1470,65 1440,82 1405,105 1375,140 1352,113 1305,120 1270,130 1240,155 1222,168 1197,188 1160,245 1125,325 1110,390 1098,455 1103,428 1106,425 1116,465 1130,390 1142,385 1117,470 1090,470 1093,492 1150,498 1165,480 1170,490 1145,517 1087,530 1040,638 1063,600 1075,625 1056,674 1048,674 1020,650 1000,677 978,695 966,738 958,738 922,783 838,832 865,832 903,888 905,912 917,926 938,930 938,945 883,998 847,942 765,966 753,955 720,982 715,1010 700,990 688,1005 686,1022 662,1022 660,1047 651,1050 652,1075 643,1092 632,1078 632,1100 607,1112 605,1135 593,1137 610,1157 600,1172 548,1190 517,1228 513,1265 503,1265 503,1210 496,1165 487,1195 489,1158 460,1150 442,1165 438,1135 425,1130 390,1128 378,1150 365,1140 350,1160 330,1165 335,1185 315,1190 312,1210 320,1225 313,1242 302,1270 304,1290 1568,1290',
        '438,1060 465,1025 520,988 537,968 560,958 608,920 680,886 700,882 745,873 752,885 740,897 683,937 680,950 643,985 563,1098 550,1100 538,1088 508,1086 485,1075 458,1073',
      ]}
    />
    <Areas
      fill={WATER}
      shapes={[
        '1140,322 1150,312 1160,325 1150,340',
        '1160,455 1190,445 1210,470 1165,490',
        '1215,475 1265,452 1235,483',
        '1403,515 1450,528 1437,558',
        '1515,640 1568,625 1525,660',
        '957,935 972,922 970,952',
        '1322,460 1345,475 1323,490',
        '1095,430 1113,470 1140,390 1128,390 1115,440',
        '1530,755 1550,728 1540,728',
      ]}
    />
    <Creeks width={4} lines={['1165,500 1157,457 1185,443 1210,472 1230,440 1260,440 1278,415 1310,443', '1505,640 1515,720 1550,730 1568,750']} />
    <Creeks width={3} lines={['1365,460 1385,475 1400,515 1445,525 1465,560 1465,600 1492,615', '508,1265 514,1300', '517,985 523,1000']} />
    <Roads
      width={6}
      lines={[
        '1212,108 1245,200 1270,240 1285,350 1305,395 1330,440 1370,500 1430,580 1475,660 1510,740 1530,795 1568,870',
        '1568,110 1440,250 1310,395',
        '978,632 1048,690 1098,738 1180,805 1250,862 1310,862 1345,845 1390,812 1425,798 1530,805',
        '1568,565 1500,630 1370,745 1250,860 1205,915 1115,1080 1075,1150',
        '262,1245 370,1280 395,1290',
      ]}
    />
    <Roads
      width={4.5}
      lines={[
        '1330,440 1278,480 1175,600 1098,738 1050,795 998,910 965,975 885,1040 815,1055 680,1190 625,1290',
        '1370,765 1250,862',
        '1115,1080 1145,1145 1195,1230 1235,1290',
        '980,1290 995,1260 1028,1225',
        '1425,840 1405,1010 1378,1240 1372,1290',
        '1140,1290 1378,1245 1568,1210',
      ]}
    />
    <Roads
      width={2.5}
      lines={[
        '1245,870 1262,920 1275,1020 1308,1115 1310,1170 1330,1248',
        '1520,890 1445,980 1308,1115 1225,1200',
        '1230,890 1135,975 1015,1095 845,1290',
        '1048,1275 1145,1258',
        '985,718 1060,795 1160,890 1180,925',
        '1040,828 1060,868 1100,915 1135,965',
        '1165,628 1200,640 1215,675 1240,690 1285,705 1345,655 1385,640 1420,570',
        '1125,690 1200,725 1262,742 1290,800',
        '1200,725 1210,825 1285,705 1330,800',
        '1370,500 1355,550 1360,640 1370,745',
        '1433,275 1460,410 1568,570',
        '1275,245 1335,360 1370,445',
        '1450,245 1568,355',
        '1300,185 1330,160 1348,125 1370,150 1420,250',
        '1530,155 1568,185',
        '940,1005 945,1035 1010,1190 1045,1275',
        '775,1010 830,1140 890,1290',
        '680,1190 725,1290',
        '998,910 1030,975 1115,1075',
        '385,1230 470,1260 570,1290',
        '455,1262 450,1310',
        '1510,740 1515,830 1520,890 1545,970 1568,1030',
        '1015,1095 1050,1180',
        '1328,425 1350,400 1362,410 1335,430',
        '1450,620 1440,740 1455,765',
      ]}
    />
    <g opacity=".7">
      <Roads width={1} lines={['1285,835 1330,800 1345,845 1295,860 1310,885 1260,870 1345,820', '1475,640 1495,660 1480,700 1492,740', '1235,870 1255,885 1315,880']} />
    </g>
  </g>
);

const EastLower = () => (
  <g transform="translate(1720 800) scale(.47066 .33333)">
    <Areas
      fill={WATER}
      shapes={['258,0 247,80 250,140 252,240 250,380 257,450 280,570 308,690 317,780 317,870 300,960 270,1080 250,1160 220,1220 195,1262 160,1293 80,1302 -15,1313 -15,1330 1568,1330 1568,0']}
    />
    <Areas
      fill={LAND}
      shapes={[
        '304,0 304,12 295,65 280,68 300,80 288,105 285,175 300,185 292,240 288,300 285,380 292,440 300,480 340,527 323,540 340,600 330,625 350,630 348,690 383,705 383,720 362,722 362,757 375,760 375,788 362,790 362,825 395,828 400,850 392,860 350,860 340,912 325,1000 335,1015 318,1050 305,1130 318,1168 280,1172 280,1180 318,1182 316,1192 288,1193 270,1240 290,1275 320,1295 335,1330 1568,1330 1568,0',
      ]}
    />
    <Areas
      fill={WATER}
      shapes={[
        '508,0 516,0 532,85 545,115 573,118 577,135 572,140 545,128 525,95 512,40',
        '557,205 565,205 562,245 575,245 595,225 650,235 670,268 660,268 645,245 600,235 575,258 557,260',
        '675,285 720,290 735,315 763,325 763,350 700,357 675,310',
        '738,385 755,385 760,425 778,440 775,490 755,505 733,495 727,430',
        '793,475 825,495 860,497 900,483 955,487 995,452 1030,485 1060,490 1075,515 1075,548 1025,513 925,527 900,513 860,523 835,523 815,533 793,515',
        '1090,528 1110,530 1175,563 1190,600 1212,645 1205,650 1180,605 1155,575 1130,570 1088,557',
        '1225,652 1288,687 1240,675',
        '1305,680 1330,690 1335,698',
        '895,793 905,797 900,815 825,850 818,835',
        '800,835 802,850 765,885 745,880 725,905 750,915 750,922 720,918 685,958 683,940 735,878 760,860',
        '910,815 925,825 930,885 945,890 965,872 1012,898 1010,903 965,882 943,910 925,910',
        '690,972 710,975 770,1015 803,1060 800,1065 760,1030 700,995',
        '425,825 440,825 460,865 472,925 447,920 455,875',
        '345,825 397,828 395,836 360,840 400,845 392,860 345,860',
        '493,830 508,828 515,850 490,862',
        '482,1045 495,1045 490,1075 475,1072',
        '665,1200 690,1203 710,1195 725,1210 690,1228',
        '745,1205 775,1240 800,1270 817,1320 800,1310 780,1260 745,1220',
        '1335,930 1355,895 1373,893 1365,920 1335,938',
        '1412,985 1435,970 1447,985 1425,1010 1435,1075 1413,1080 1420,1050 1408,1010',
        '605,1240 630,1265 615,1270',
        '490,1160 508,1185 505,1197',
        '345,1320 358,1285 390,1305 385,1320',
        '415,1310 455,1300 465,1320',
      ]}
    />
    <polygon points="985,478 997,460 1012,476" fill={LAND} />
    <Creeks width={2.2} lines={['445,950 480,990 500,1025 487,1060 492,1125 520,1130 545,1145', '525,1000 545,985 590,990 610,1012', '490,860 515,850 540,800 575,800 600,815 608,805', '595,1140 645,1145 645,1160 665,1190', '638,993 655,980']} />
    <Roads
      width={6}
      lines={[
        '255,0 380,25 435,75 510,100 550,140 560,190 650,215 700,250 775,320',
        '840,345 940,325 1180,300 1350,265 1568,222',
        '1230,15 1390,115 1568,225',
        '940,325 1090,470 1250,590 1355,660 1568,730',
        '455,180 500,270 500,360 480,410 455,470 450,700 465,820 490,930 545,1100 570,1200 585,1330',
        '315,890 400,920 470,945 500,980',
      ]}
    />
    <Roads
      width={4.5}
      lines={[
        '415,190 415,695 435,715 432,800 412,820 410,920 405,1330',
        '470,200 510,290 600,395 725,550 820,605 850,640',
        '920,690 1110,770 1160,810 1300,1005 1400,1080 1540,1330',
        '500,290 540,440 600,650 660,900 710,1110 755,1330',
        '570,155 760,105 850,80',
        '1000,55 1225,15 1330,0',
        '1000,0 970,50 940,130 860,290 795,350 790,480 760,570 720,720 685,800 660,910 620,1020 570,1190 515,1330',
        '315,417 450,400 800,350',
        '750,570 760,700 830,870 890,1030 1070,1330',
        '860,1000 905,1060 1010,1250 1050,1330',
        '500,1080 700,1100 820,1125 850,1110 910,1050',
        '1378,0 1350,240 1300,600 1300,720 1330,930 1345,1000 1400,1080',
        '920,1320 1120,1195 1240,1100 1430,920 1530,750 1568,700',
        '645,0 570,170',
        '1550,740 1480,1150 1462,1190 1540,1330',
        '1225,1100 1180,1330',
        '925,42 980,42',
        '440,70 445,190',
      ]}
    />
    <Roads
      width={2.5}
      lines={[
        '715,0 760,120 800,225',
        '540,10 610,45 745,170 860,270 920,330',
        '880,0 760,110 745,175 680,240',
        '605,60 480,210 395,400',
        '1050,0 1050,45',
        '1130,0 1200,150 1245,125 1250,45',
        '1050,15 1170,5',
        '1200,150 1230,200 1300,260',
        '1200,150 1130,280',
        '1135,130 1115,190 1125,265',
        '1075,175 1075,280 1040,370',
        '940,130 995,180 960,270',
        '1120,300 1050,470',
        '1090,300 1080,450 1085,560 1070,620 1050,800 1000,940',
        '410,375 550,360 600,292 628,310',
        '700,225 615,375',
        '420,445 535,430',
        '335,445 415,570 600,648 720,585',
        '440,750 530,750 550,728 615,728',
        '525,945 750,800 900,712 1100,822 1140,885 1160,970 1230,1110',
        '830,535 810,640 815,720 830,800',
        '790,475 840,490 930,470 1000,440 1080,500',
        '790,525 830,540 900,520 930,545 1000,530 1090,570 1150,580 1185,640',
        '1250,590 1230,630 1280,660 1330,670 1380,740 1405,870 1490,980',
        '1300,595 1340,620 1335,640',
        '1165,540 1180,500 1195,540',
        '1190,845 1310,832',
        '1290,690 1245,690 1215,760 1215,840',
        '1480,840 1490,980',
        '1005,940 1030,952 1110,950 1135,885 1175,840',
        '1115,950 1112,1050 1075,1210',
        '1025,1065 1050,1055 1160,1055 1220,1100',
        '1010,1035 1035,1100 1090,1160',
        '905,840 790,980',
        '680,960 740,935 790,985 850,1000 905,1050',
        '410,1030 540,1145',
        '330,1070 480,1230 580,1330',
        '400,925 330,1070 405,1260',
        '330,1070 328,1135',
        '515,755 555,880 520,945',
        '555,880 630,920 660,915',
        '570,1180 650,1245',
        '465,975 465,1110 480,1150 560,1155',
        '410,975 660,968',
        '1350,260 1400,405 1568,470',
        '1540,300 1525,430 1425,680',
        '890,350 895,400 905,470',
        '970,360 955,400 955,465',
        '890,720 910,775 890,810 805,820',
        '800,860 850,960 890,1010',
        '460,0 452,50',
        '1180,1200 1130,1230 1060,1330',
        '1265,1090 1260,1330',
        '1400,1080 1568,1145',
        '1005,1050 950,1110',
        '860,1110 975,1330',
        '300,90 420,120',
      ]}
    />
    <g opacity=".6">
      <Roads width={1} lines={['680,240 710,225 718,245 700,270 690,250', '875,310 895,350 885,380 900,330', '780,325 830,345 800,360', '1325,270 1350,245 1360,270 1410,265', '900,190 915,210']} />
    </g>
  </g>
);

const YELLOW: string[] = [
  '1423,180 1432,187', '1436,195 1436,203', '1822,121 1818,133', '1798,188 1801,193', '1986,238 2004,251',
  '2235,143 2235,146', '2298,164 2298,167', '1849,343 1852,343', '2068,261 2069,262',
  '1496,716 1512,730', '1341,690 1341,694', '1338,716 1338,718', '1429,852 1435,846', '1585,875 1590,875', '1554,756 1554,759',
  '1577,762 1577,767', '1266,1144 1288,1160', '1711,735 1711,737', '1360,846 1361,847', '1634,861 1636,861',
  '1791,915 1791,918', '1729,393 1730,394',
];
const OLIVE: string[] = [
  '1375,154 1386,157', '1818,133 1810,155', '1800,158 1799,171', '1484,706 1496,716', '1435,846 1442,840', '1288,1160 1296,1165', '1330,814 1332,814',
  '1618,828 1620,828', '1757,617 1757,620', '1900,332 1908,331', '2265,199 2268,200', '2090,292 2092,297', '1600,300 1604,297',
  '2180,138 2181,139', '1757,98 1758,97', '1718,765 1722,766', '1776,1045 1776,1048',
];
const BLUE: string[] = [
  '1402,212 1409,208', '1668,258 1681,260', '1706,254 1700,260', '1684,277 1675,288', '2235,212 2246,198', '2089,292 2103,288',
  '2200,252 2204,248', '2004,251 2008,255', '2296,82 2300,87', '2358,130 2359,133', '2357,185 2361,186', '2249,178 2250,187',
  '1871,535 1880,546', '1899,563 1904,567', '1788,573 1795,589', '2042,413 2038,427', '2038,434 2041,437', '1757,563 1760,571',
  '1792,904 1791,914', '1762,896 1766,897', '1708,763 1718,765', '1352,867 1361,877', '1551,862 1555,863', '1341,698 1339,712',
  '1629,114 1628,117', '2407,93 2404,98', '1525,82 1524,86',
];

const labels: { text: string; x: number; y: number; w: number; size?: number; weight?: number; fill?: string }[] = [
  { text: 'l', x: 1136, y: 842, w: 7, size: 32 },
  { text: 'er Darby', x: 1134, y: 944, w: 118 },
  { text: 'wnship', x: 1134, y: 979, w: 95 },
  { text: 'Darby', x: 1197, y: 1025, w: 78 },
  { text: 'en', x: 1124, y: 1141, w: 31 },
  { text: 'oft', x: 1134, y: 1199, w: 31 },
  { text: 'Palmyra', x: 2308, y: 461, w: 109 },
  { text: 'Pennsauken', x: 2133, y: 784, w: 168 },
  { text: 'Merchantville', x: 2087, y: 841, w: 176 },
  { text: 'Camden', x: 1855, y: 857, w: 121, size: 33, weight: 500, fill: '#4a66f0' },
  { text: 'Cherry Hill', x: 2276, y: 921, w: 148 },
  { text: 'Collingswood', x: 2064, y: 1026, w: 175 },
  { text: 'Haddon', x: 1981, y: 1157, w: 102 },
  { text: 'Audubon', x: 2086, y: 1199, w: 115 },
  { text: 'Haddonfield', x: 2237, y: 1196, w: 159 },
  { text: 'C', x: 2449, y: 526, w: 18 },
  { text: 'M', x: 2453, y: 807, w: 24 },
];

const Label = ({ text, x, y, w, size = 31, weight = 400, fill = '#3f5de3' }: (typeof labels)[number]) => (
  <text
    x={x}
    y={y}
    textLength={w}
    lengthAdjust="spacingAndGlyphs"
    fontSize={size}
    fontWeight={weight}
    fill={fill}
    stroke="#07104a"
    strokeWidth="5"
    strokeLinejoin="round"
    paintOrder="stroke"
  >
    {text}
  </text>
);

function Streaks({ lines, color }: { lines: string[]; color: string }) {
  return (
    <g fill="none" stroke={color} strokeWidth="1">
      {lines.map((p) => (
        <polyline key={p} points={p} />
      ))}
    </g>
  );
}

function MapView() {
  return (
    <main className="relative min-w-0 flex-1 bg-black">
      <svg className="block h-[1158px] w-[1322px] font-['Roboto',sans-serif]" viewBox="1136 82 1322 1158">
        <defs>
          <clipPath id="town">
            <polygon points="1800,82 2064,82 2072,90 2058,110 2043,128 2007,158 1900,300" />
          </clipPath>
        </defs>
        <NorthWest />
        <NorthCenter />
        <SouthWest />
        <EastUpper />
        <EastLower />
        <Streaks lines={OLIVE} color="#4a4e0c" />
        <Streaks lines={BLUE} color="#101e7c" />
        <Streaks lines={YELLOW} color="#d3dc1a" />
        <g clipPath="url(#town)">
          <Label text="Chelten" x={1957} y={117} w={106} />
        </g>
        {labels.map((l) => (
          <Label key={l.text} {...l} />
        ))}
      </svg>
      <div className="absolute top-6 right-4 flex flex-col gap-6 text-[#24384e]">
        <button className="flex size-[60px] items-center justify-center rounded-lg bg-white">
          <svg width="30" height="29" viewBox="0 0 30 29" fill="none" stroke="#24384e" strokeLinecap="round">
            <circle cx="11" cy="11" r="9" strokeWidth="4" />
            <path d="M18.500 18 L26.500 25.500" strokeWidth="5.500" />
          </svg>
        </button>
        <div className="flex w-[60px] flex-col rounded-lg bg-white">
          <button className="flex h-[60px] items-center justify-center"><PlusIcon className="size-5" /></button>
          <button className="flex h-[60px] items-center justify-center border-t-2 border-[#dddddd]"><span className="h-1 w-5 rounded-full bg-[#24384e]" /></button>
          <button className="flex h-[60px] items-center justify-center border-t-2 border-[#dddddd]">
            <svg width="21" height="22" viewBox="0 0 21 22" fill="#24384e">
              <path d="M10.500 0 Q11.500 0 12 1.500 L20.500 20 Q20.800 22 19 21.500 L10.500 16 L2 21.500 Q.2 22 .5 20 L9 1.500 Q9.500 0 10.500 0Z" />
            </svg>
          </button>
        </div>
      </div>
    </main>
  );
}

function ValuesPopover() {
  return (
    <div className="absolute top-[310px] left-[1128px] h-[360px] w-[480px] rounded-lg bg-white px-6 pt-[26px] text-xl text-[#24384e] shadow-[0_0_40px_rgba(31,51,73,.35)]">
      <svg className="absolute top-[30px] -left-3 h-6 w-3" viewBox="0 0 12 24" fill="#fff"><path d="M12 0 L0 12 L12 24Z" /></svg>
      <div className="h-7 leading-7 font-bold">Set values for HIGH_POVERTY</div>
      <div className={`mt-6 flex h-[42px] items-center rounded-lg border-2 border-[#c6d2e1] pl-[11px] text-[#e1e8f0] ${MONO}`}>Filter HIGH_POVERTY values</div>
      <div className="mt-[27px] flex flex-col gap-[3px] px-0.5">
        <div className="flex h-12 items-center rounded-lg pl-3">No</div>
        <div className="flex h-12 items-center rounded-lg bg-[#c6d2e1] pt-px pl-3">Yes</div>
      </div>
    </div>
  );
}

export default function App() {
  return (
    <div className={`relative flex h-[1240px] w-[2458px] flex-col overflow-hidden ${SANS}`}>
      <Header />
      <div className="flex min-h-0 flex-1">
        <LayersPanel />
        <StylePanel />
        <MapView />
      </div>
      <ValuesPopover />
    </div>
  );
}
